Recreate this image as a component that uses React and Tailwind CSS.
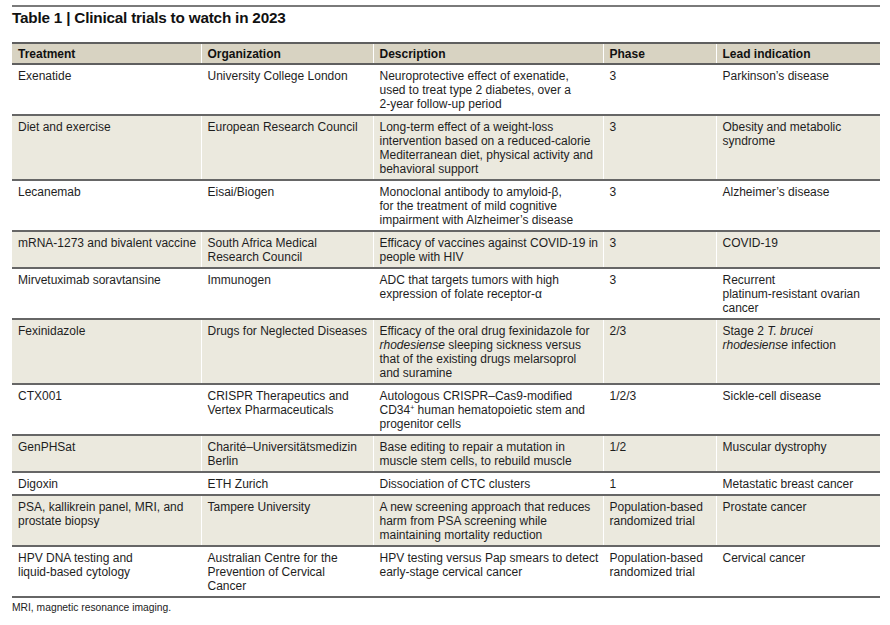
import React from "react";

const L = (...lines) =>
  lines.map((l, i) => (
    <React.Fragment key={i}>
      {i > 0 && <br />}
      {l}
    </React.Fragment>
  ));

const rows = [
  {
    treatment: "Exenatide",
    org: "University College London",
    desc: L("Neuroprotective effect of exenatide,", "used to treat type 2 diabetes, over a", "2-year follow-up period"),
    phase: "3",
    lead: "Parkinson’s disease",
  },
  {
    treatment: "Diet and exercise",
    org: "European Research Council",
    desc: L(
      "Long-term effect of a weight-loss",
      "intervention based on a reduced-calorie",
      "Mediterranean diet, physical activity and",
      "behavioral support"
    ),
    phase: "3",
    lead: L("Obesity and metabolic", "syndrome"),
  },
  {
    treatment: "Lecanemab",
    org: "Eisai/Biogen",
    desc: L("Monoclonal antibody to amyloid-β,", "for the treatment of mild cognitive", "impairment with Alzheimer’s disease"),
    phase: "3",
    lead: "Alzheimer’s disease",
  },
  {
    treatment: "mRNA-1273 and bivalent vaccine",
    org: L("South Africa Medical", "Research Council"),
    desc: L("Efficacy of vaccines against COVID-19 in", "people with HIV"),
    phase: "3",
    lead: "COVID-19",
  },
  {
    treatment: "Mirvetuximab soravtansine",
    org: "Immunogen",
    desc: L("ADC that targets tumors with high", "expression of folate receptor-α"),
    phase: "3",
    lead: L("Recurrent", "platinum-resistant ovarian", "cancer"),
  },
  {
    treatment: "Fexinidazole",
    org: "Drugs for Neglected Diseases",
    desc: L(
      "Efficacy of the oral drug fexinidazole for",
      <>
        <i>rhodesiense</i> sleeping sickness versus
      </>,
      "that of the existing drugs melarsoprol",
      "and suramine"
    ),
    phase: "2/3",
    lead: L(
      <>
        Stage 2 <i>T. brucei</i>
      </>,
      <>
        <i>rhodesiense</i> infection
      </>
    ),
  },
  {
    treatment: "CTX001",
    org: L("CRISPR Therapeutics and", "Vertex Pharmaceuticals"),
    desc: L(
      "Autologous CRISPR–Cas9-modified",
      <>
        CD34<span className="relative top-[-4px] text-[7px] leading-none">+</span> human hematopoietic stem and
      </>,
      "progenitor cells"
    ),
    phase: "1/2/3",
    lead: "Sickle-cell disease",
  },
  {
    treatment: "GenPHSat",
    org: L("Charité–Universitätsmedizin", "Berlin"),
    desc: L("Base editing to repair a mutation in", "muscle stem cells, to rebuild muscle"),
    phase: "1/2",
    lead: "Muscular dystrophy",
  },
  {
    treatment: "Digoxin",
    org: "ETH Zurich",
    desc: "Dissociation of CTC clusters",
    phase: "1",
    lead: "Metastatic breast cancer",
  },
  {
    treatment: L("PSA, kallikrein panel, MRI, and", "prostate biopsy"),
    org: "Tampere University",
    desc: L("A new screening approach that reduces", "harm from PSA screening while", "maintaining mortality reduction"),
    phase: L("Population-based", "randomized trial"),
    lead: "Prostate cancer",
  },
  {
    treatment: L("HPV DNA testing and", "liquid-based cytology"),
    org: L("Australian Centre for the", "Prevention of Cervical", "Cancer"),
    desc: L("HPV testing versus Pap smears to detect", "early-stage cervical cancer"),
    phase: L("Population-based", "randomized trial"),
    lead: "Cervical cancer",
  },
];

const cell = "align-top pl-[6px] pr-[3px] border-x border-white first:border-l-0 last:border-r-0";

export default function App() {
  return (
    <div
      className="w-[890px] h-[625px] bg-white text-[#1e1e1e] pl-[12px] pr-[10px] pt-[5px]"
      style={{ fontFamily: '"Liberation Sans", Arial, sans-serif' }}
    >
      <div className="border-t-2 border-[#7a7a7a] pt-[1px]">
        <h1 className="text-[15.3px] font-bold leading-[20px] tracking-[-0.2px] text-[#111]">
          Table 1 | Clinical trials to watch in 2023
        </h1>
      </div>

      <table className="mt-[14px] w-full border-collapse text-[12px] leading-[14px] table-fixed">
        <colgroup>
          <col className="w-[189px]" />
          <col className="w-[172px]" />
          <col className="w-[230px]" />
          <col className="w-[113px]" />
          <col />
        </colgroup>
        <thead>
          <tr className="bg-[#d8d3c2] border-t-2 border-b-2 border-[#5f5f5f]">
            {["Treatment", "Organization", "Description", "Phase", "Lead indication"].map((h) => (
              <th key={h} className={`${cell} text-left font-bold text-[#111] pt-[3px] pb-[2px]`}>
                {h}
              </th>
            ))}
          </tr>
        </thead>
        <tbody>
          {rows.map((r, i) => (
            <tr
              key={i}
              className={`border-b-2 border-[#666] ${i % 2 === 1 ? "bg-[#ebe9de]" : "bg-white"}`}
            >
              <td className={`${cell} pt-[4px] pb-[3px]`}>{r.treatment}</td>
              <td className={`${cell} pt-[4px] pb-[3px]`}>{r.org}</td>
              <td className={`${cell} pt-[4px] pb-[3px]`}>{r.desc}</td>
              <td className={`${cell} pt-[4px] pb-[3px]`}>{r.phase}</td>
              <td className={`${cell} pt-[4px] pb-[3px]`}>{r.lead}</td>
            </tr>
          ))}
        </tbody>
      </table>

      <p className="mt-[4px] text-[10.3px] leading-[12px] text-[#222]">MRI, magnetic resonance imaging.</p>
    </div>
  );
}
